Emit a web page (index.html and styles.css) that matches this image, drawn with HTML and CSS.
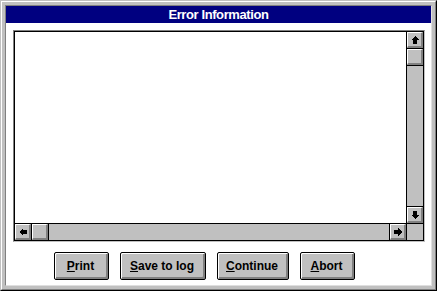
FILE: index.html
```html
<!DOCTYPE html>
<html lang="en">
<head>
    <meta charset="UTF-8">
    <title>Error Information</title>
    <link rel="stylesheet" href="styles.css">
</head>
<body>
    <div class="window">
        <div class="frame">
            <div class="client">
                <div class="title-bar">Error Information</div>
                <div class="dialog-body">
                    <div class="textbox">
                        <div class="textbox-inner">
                            <div class="text-area"></div>
                            <!-- vertical scrollbar -->
                            <div class="vscroll">
                                <div class="sb-btn">
                                    <svg width="14" height="14" viewBox="0 0 14 14" shape-rendering="crispEdges"><polygon points="7,3 11,7 9,7 9,11 5,11 5,7 3,7" fill="#000"/></svg>
                                </div>
                                <div class="sb-thumb"></div>
                                <div class="sb-track"></div>
                                <div class="sb-btn">
                                    <svg width="14" height="14" viewBox="0 0 14 14" shape-rendering="crispEdges"><polygon points="7,11 11,7 9,7 9,3 5,3 5,7 3,7" fill="#000"/></svg>
                                </div>
                            </div>
                            <!-- horizontal scrollbar -->
                            <div class="hscroll">
                                <div class="sb-btn">
                                    <svg width="14" height="14" viewBox="0 0 14 14" shape-rendering="crispEdges"><polygon points="3,7 7,3 7,5 11,5 11,9 7,9 7,11" fill="#000"/></svg>
                                </div>
                                <div class="sb-thumb"></div>
                                <div class="sb-track"></div>
                                <div class="sb-btn">
                                    <svg width="14" height="14" viewBox="0 0 14 14" shape-rendering="crispEdges"><polygon points="11,7 7,3 7,5 3,5 3,9 7,9 7,11" fill="#000"/></svg>
                                </div>
                            </div>
                            <div class="sb-corner"></div>
                        </div>
                    </div>
                    <div class="button-row">
                        <button class="push-button btn-print"><u>P</u>rint</button>
                        <button class="push-button btn-save"><u>S</u>ave to log</button>
                        <button class="push-button btn-continue"><u>C</u>ontinue</button>
                        <button class="push-button btn-abort"><u>A</u>bort</button>
                    </div>
                </div>
            </div>
        </div>
    </div>
</body>
</html>
```

FILE: styles.css
```css
* {
    box-sizing: border-box;
}

body {
    margin: 0;
    padding: 0;
    background-color: #ffffff;
    font-family: "Liberation Sans", Arial, sans-serif;
}

/* Window frame */
.window {
    width: 437px;
    height: 291px;
    background-color: #c0c0c0;
    border: 1px solid;
    border-color: #c0c0c0 #000000 #000000 #c0c0c0;
}

.frame {
    height: 100%;
    padding: 3px;
    border: 1px solid;
    border-color: #ffffff #808080 #808080 #ffffff;
}

.client {
    height: 100%;
    display: flex;
    flex-direction: column;
    border: 1px solid;
    border-color: #808080 #dfdfdf #dfdfdf #808080;
    background-color: #ffffff;
}

.title-bar {
    height: 17px;
    background-color: #000080;
    color: #ffffff;
    font-size: 13px;
    font-weight: bold;
    letter-spacing: -0.4px;
    line-height: 17px;
    text-align: center;
}

.dialog-body {
    flex: 1;
    display: flex;
    flex-direction: column;
    padding: 7px 6px 0 7px;
}

/* Text box with scrollbars */
.textbox {
    height: 212px;
    border: 1px solid;
    border-color: #808080 #c0c0c0 #c0c0c0 #808080;
}

.textbox-inner {
    height: 100%;
    border: 1px solid #000000;
    display: grid;
    grid-template-columns: 1fr 17px;
    grid-template-rows: 1fr 17px;
}

.text-area {
    background-color: #ffffff;
}

.vscroll {
    display: flex;
    flex-direction: column;
    border-left: 1px solid #000000;
    background-color: #c0c0c0;
}

.hscroll {
    display: flex;
    border-top: 1px solid #000000;
    background-color: #c0c0c0;
}

.sb-corner {
    background-color: #c0c0c0;
    border-top: 1px solid #000000;
    border-left: 1px solid #000000;
}

.sb-btn,
.sb-thumb {
    width: 16px;
    height: 16px;
    flex: none;
    display: flex;
    align-items: center;
    justify-content: center;
    background-color: #c0c0c0;
    border-top: 1px solid #ffffff;
    border-left: 1px solid #ffffff;
    border-right: 2px solid #808080;
    border-bottom: 2px solid #808080;
}

.sb-btn svg {
    display: block;
    margin: 0 -1px -1px 0;
}

.vscroll .sb-thumb {
    outline: 1px solid #000000;
    margin-top: 1px;
}

.hscroll .sb-thumb {
    outline: 1px solid #000000;
    margin-left: 1px;
}

.vscroll .sb-track {
    flex: 1;
    margin-top: 1px;
    border-bottom: 1px solid #000000;
}

.hscroll .sb-track {
    flex: 1;
    margin-left: 1px;
    border-right: 1px solid #000000;
}

/* Buttons */
.button-row {
    display: flex;
    gap: 11px;
    margin-top: 10px;
    padding-left: 41px;
}

.push-button {
    height: 28px;
    padding: 0 2px 1px 0;
    border: 1px solid #000000;
    border-radius: 2px;
    background-color: #c0c0c0;
    box-shadow: inset 1px 1px #ffffff, inset -2px -2px #808080;
    font-family: "Liberation Sans", Arial, sans-serif;
    font-size: 12px;
    font-weight: bold;
    color: #000000;
}

.btn-print {
    width: 55px;
}

.btn-save {
    width: 86px;
}

.btn-continue {
    width: 72px;
}

.btn-abort {
    width: 55px;
}
```
